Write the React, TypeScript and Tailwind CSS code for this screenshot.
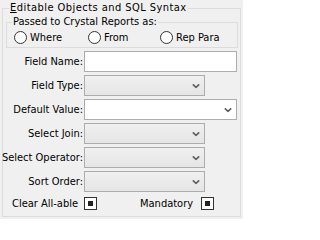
import type { ReactNode } from 'react'

function Chevron() {
  return (
    <svg width="8" height="5" viewBox="0 0 8 5" className="absolute right-[4px] top-1/2 -translate-y-1/2" aria-hidden="true">
      <path d="M0.8 0.8 L4 3.8 L7.2 0.8" fill="none" stroke="#606060" strokeWidth="1.6" />
    </svg>
  )
}

function Row({ label, children }: { label: string; children: ReactNode }) {
  return (
    <div className="flex h-[21px] items-center gap-[1px]">
      <div className="flex w-[77px] shrink-0 justify-end whitespace-nowrap">
        <span>{label}</span>
      </div>
      {children}
    </div>
  )
}

function TextBox() {
  return <div className="h-[21px] w-[153px] border border-[#adadad] bg-white" />
}

function EditCombo() {
  return (
    <div className="relative h-[21px] w-[153px] border border-[#adadad] bg-white">
      <Chevron />
    </div>
  )
}

function DropList() {
  return (
    <div className="relative h-[21px] w-[121px] border border-[#adadad] bg-gradient-to-b from-[#f0f0f0] to-[#e5e5e5]">
      <Chevron />
    </div>
  )
}

function Radio({ label, className }: { label: string; className?: string }) {
  return (
    <div className={`flex items-center gap-[3px] ${className ?? ''}`}>
      <span className="h-[13px] w-[13px] shrink-0 rounded-full border border-[#333333] bg-white" />
      <span>{label}</span>
    </div>
  )
}

function CheckBox() {
  return (
    <span className="flex h-[13px] w-[13px] shrink-0 items-center justify-center border border-[#333333] bg-white">
      <span className="h-[5px] w-[5px] bg-[#222222]" />
    </span>
  )
}

export default function App() {
  return (
    <div className="h-[219px] w-[243px] overflow-hidden bg-[#f0f0f0] font-['DejaVu_Sans_Condensed','DejaVu_Sans',sans-serif] text-[11px] leading-[14px] text-black">
      <fieldset className="ml-[2px] mt-[1px] w-[239px] border border-[#dcdcdc] pb-[4px] pl-[3px] pr-[2px]">
        <legend className="ml-[3px] px-[1px] tracking-[0.45px]">
          <span className="underline">E</span>ditable Objects and SQL Syntax
        </legend>

        <fieldset className="w-[232px] border border-[#dcdcdc] pb-[1px] pl-[4px]">
          <legend className="ml-[1px] px-[1px]">Passed to Crystal Reports as:</legend>
          <div className="flex h-[17px] items-center pl-[3px]">
            <Radio label="Where" className="w-[74px]" />
            <Radio label="From" className="w-[72px]" />
            <Radio label="Rep Para" />
          </div>
        </fieldset>

        <div className="mt-[3px] flex flex-col gap-[3px]">
          <Row label="Field Name:">
            <TextBox />
          </Row>
          <Row label="Field Type:">
            <DropList />
          </Row>
          <Row label="Default Value:">
            <EditCombo />
          </Row>
          <Row label="Select Join:">
            <DropList />
          </Row>
          <Row label="Select Operator:">
            <DropList />
          </Row>
          <Row label="Sort Order:">
            <DropList />
          </Row>
        </div>

        <div className="mt-[3px] flex h-[17px] items-center">
          <div className="w-[78px] shrink-0 whitespace-nowrap pl-[6px]">Clear All-able</div>
          <CheckBox />
          <span className="ml-[43px]">Mandatory</span>
          <span className="ml-[8px]">
            <CheckBox />
          </span>
        </div>
      </fieldset>
    </div>
  )
}
